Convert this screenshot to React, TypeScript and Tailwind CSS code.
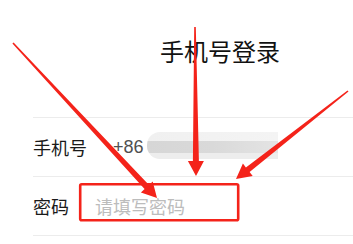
import React from 'react';

type Pt = [number, number];

// tapered arrow: thin at the tail, wide near the head
function arrowPoints(from: Pt, to: Pt, w0: number, w1: number, headLen: number, headHalf: number) {
  const dx = to[0] - from[0];
  const dy = to[1] - from[1];
  const len = Math.hypot(dx, dy);
  const ux = dx / len;
  const uy = dy / len;
  const nx = -uy;
  const ny = ux;
  const bx = to[0] - ux * headLen;
  const by = to[1] - uy * headLen;
  const pts: Pt[] = [
    [from[0] + (nx * w0) / 2, from[1] + (ny * w0) / 2],
    [bx + (nx * w1) / 2, by + (ny * w1) / 2],
    [bx + nx * headHalf, by + ny * headHalf],
    to,
    [bx - nx * headHalf, by - ny * headHalf],
    [bx - (nx * w1) / 2, by - (ny * w1) / 2],
    [from[0] - (nx * w0) / 2, from[1] - (ny * w0) / 2],
  ];
  return pts.map((p) => `${p[0].toFixed(1)},${p[1].toFixed(1)}`).join(' ');
}

const arrows: { from: Pt; to: Pt }[] = [
  { from: [13, 43], to: [157, 198] },
  { from: [195, 27], to: [196, 176] },
  { from: [348, 91], to: [236, 179] },
];

export default function App() {
  return (
    <div
      className="relative w-[353px] h-[244px] overflow-hidden bg-white"
      style={{ fontFamily: '"Noto Sans CJK SC", "Noto Sans", sans-serif' }}
    >
      <div className="pl-[33px]">
        <div className="pt-[33px] pl-[127px] text-[24px] leading-[36px] text-[#111111]">手机号登录</div>

        <div className="mt-[48px] border-t border-[#ececec]">
          <div className="flex h-[59px] items-center gap-[26px] border-b border-[#ececec] text-[18px]">
            <span className="text-[#1a1a1a]">手机号</span>
            <div className="flex items-center">
              <span className="text-[#505050]" style={{ fontFamily: '"Liberation Sans", sans-serif' }}>+86</span>
              <div className="ml-[3px] -mt-[3px] flex h-[27px] w-[131px] flex-col overflow-hidden rounded-l-[13px] blur-[0.5px]">
                <div className="h-[9px] bg-gradient-to-r from-[#f0f0f0] to-[#f4f4f4]" />
                <div className="h-[12px] bg-gradient-to-r from-[#d6d6d6] via-[#d9d9d9] to-[#e4e4e4]" />
                <div className="h-[6px] bg-[#ededed]" />
              </div>
            </div>
          </div>

          <div className="flex h-[59px] items-center gap-[26px] border-b border-[#ececec] text-[18px]">
            <span className="text-[#1a1a1a]">密码</span>
            <span className="text-[#bcbcbc]">请填写密码</span>
          </div>
        </div>
      </div>

      {/* annotation overlay */}
      <svg className="absolute left-0 top-0" width="353" height="244" viewBox="0 0 353 244">
        <rect x="80.2" y="184.2" width="158" height="36" rx="1.5" fill="none" stroke="#f4231a" strokeWidth="2.6" />
        {arrows.map((a, i) => (
          <polygon key={i} points={arrowPoints(a.from, a.to, 1.6, 6, 15, 8)} fill="#f4231a" />
        ))}
      </svg>
    </div>
  );
}
